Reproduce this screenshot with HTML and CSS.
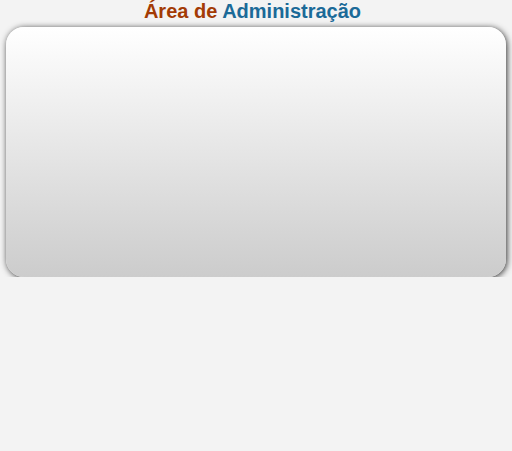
FILE: index.html
```html
<!DOCTYPE html>
<html lang="pt">
<head>
<meta charset="utf-8">
<title>Área de Administração</title>
<link rel="stylesheet" href="styles.css">
</head>
<body>
<h1 class="title"><span class="title-a">Área de</span> <span class="title-b">Administração</span></h1>
<div class="panel"></div>
</body>
</html>
```
FILE: styles.css
```css
html, body {
  margin: 0;
  padding: 0;
  background: #f3f3f3;
}
body {
  font-family: "Liberation Sans", Arial, sans-serif;
}
.title {
  margin: 0;
  padding: 0 7px 0 0;
  height: 27px;
  line-height: 23px;
  font-size: 20px;
  font-weight: bold;
  text-align: center;
}
.title-a { color: #a33b05; }
.title-b { color: #1b6a98; }
.panel {
  margin: 0 6px;
  height: 250px;
  border-radius: 18px;
  background: linear-gradient(to bottom, #ffffff 0%, #cccccc 100%);
  box-shadow: 1px 1px 6px rgba(0,0,0,0.8);
}
```
